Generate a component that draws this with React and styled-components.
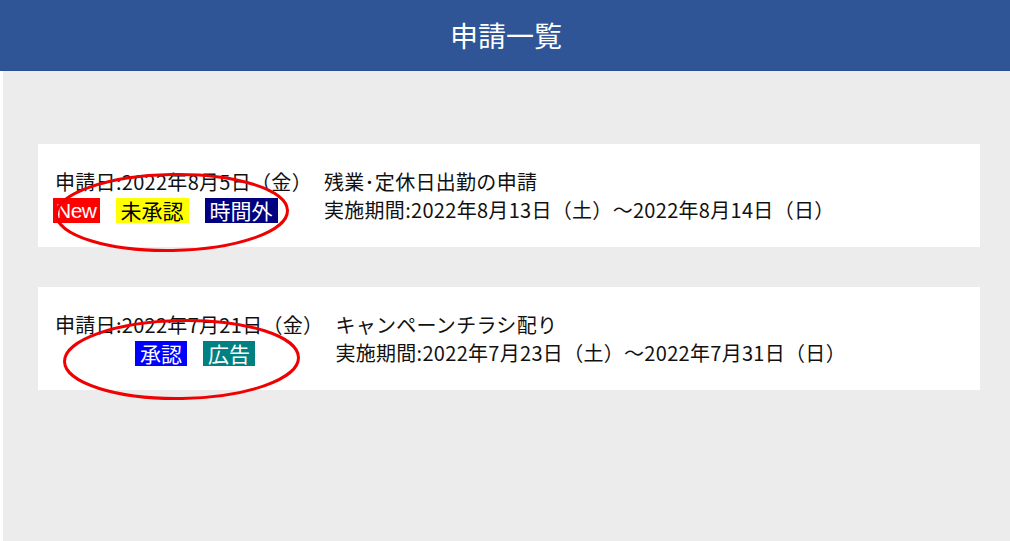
import styled, { createGlobalStyle } from "styled-components";

const GlobalStyle = createGlobalStyle`
  html, body {
    margin: 0;
    padding: 0;
    background: #ffffff;
  }
  body {
    font-family: "Noto Sans CJK JP", "Noto Sans", sans-serif;
    color: #111;
  }
`;

const requests = [
  {
    id: 1,
    applied: "申請日:2022年8月5日（金）",
    title: "残業･定休日出勤の申請",
    period: "実施期間:2022年8月13日（土）〜2022年8月14日（日）",
    indent: -2,
    badges: [
      { label: "New", bg: "#ff0000", fg: "#ffffff", latin: true },
      { label: "未承認", bg: "#ffff00", fg: "#000000" },
      { label: "時間外", bg: "#000080", fg: "#ffffff" },
    ],
    mark: { left: 17, top: 29, width: 234, height: 79 },
  },
  {
    id: 2,
    applied: "申請日:2022年7月21日（金）",
    title: "キャンペーンチラシ配り",
    period: "実施期間:2022年7月23日（土）〜2022年7月31日（日）",
    indent: 80,
    badges: [
      { label: "承認", bg: "#0000ff", fg: "#ffffff" },
      { label: "広告", bg: "#008080", fg: "#ffffff" },
    ],
    mark: { left: 25, top: 32, width: 237, height: 81 },
  },
];

const App = () => {
  return (
    <>
      <GlobalStyle />
      <Header>
        <Title>申請一覧</Title>
      </Header>
      <Main>
        {requests.map((r) => (
          <Card key={r.id}>
            <DateCol>
              <Line>{r.applied}</Line>
              <BadgeRow $indent={r.indent}>
                {r.badges.map((b) => (
                  <Badge key={b.label} $bg={b.bg} $fg={b.fg} $latin={b.latin}>
                    {b.label}
                  </Badge>
                ))}
              </BadgeRow>
            </DateCol>
            <InfoCol>
              <Line>{r.title}</Line>
              <Line>{r.period}</Line>
            </InfoCol>
            {/* red annotation drawn over the badges */}
            <Mark
              style={{ left: r.mark.left, top: r.mark.top }}
              width={r.mark.width}
              height={r.mark.height}
              viewBox={`0 0 ${r.mark.width} ${r.mark.height}`}
            >
              <ellipse
                cx={r.mark.width / 2}
                cy={r.mark.height / 2}
                rx={r.mark.width / 2 - 1.5}
                ry={r.mark.height / 2 - 1.5}
                fill="none"
                stroke="#f00000"
                strokeWidth="3"
                transform={`rotate(-1 ${r.mark.width / 2} ${r.mark.height / 2})`}
              />
            </Mark>
          </Card>
        ))}
      </Main>
    </>
  );
};

const Header = styled.header`
  height: 71px;
  background: #2f5597;
  border-bottom: 1px solid #2a4f8f;
  box-sizing: border-box;
  display: flex;
  align-items: center;
  justify-content: center;
`;

const Title = styled.h1`
  margin: 0 0 0 2px;
  color: #ffffff;
  font-size: 28px;
  font-weight: 400;
  letter-spacing: 0;
`;

const Main = styled.main`
  margin-left: 3px;
  min-height: calc(100vh - 71px);
  background: #ececec;
  padding: 73px 30px 0 35px;
  box-sizing: border-box;
  display: flex;
  flex-direction: column;
  gap: 40px;
`;

const Card = styled.section`
  position: relative;
  background: #ffffff;
  height: 103px;
  box-sizing: border-box;
  padding: 24px 17px 0;
  display: flex;
  gap: 12px;
`;

const DateCol = styled.div`
  display: flex;
  flex-direction: column;
`;

const InfoCol = styled.div`
  display: flex;
  flex-direction: column;
`;

const Line = styled.div`
  font-size: 20px;
  line-height: 28px;
  height: 28px;
  letter-spacing: 0.3px;
  white-space: nowrap;
`;

const BadgeRow = styled.div`
  display: flex;
  align-items: center;
  gap: 16px;
  height: 28px;
  margin-left: ${({ $indent }) => $indent}px;
`;

const Badge = styled.span`
  display: inline-block;
  height: 25px;
  line-height: 25px;
  padding: ${({ $latin }) => ($latin ? "0 3px" : "0 5px")};
  background: ${({ $bg }) => $bg};
  color: ${({ $fg }) => $fg};
  font-family: ${({ $latin }) =>
    $latin ? '"Liberation Sans", sans-serif' : '"Noto Sans CJK JP", sans-serif'};
  font-size: 21px;
  letter-spacing: ${({ $latin }) => ($latin ? "-0.5px" : "0")};
`;

const Mark = styled.svg`
  position: absolute;
  pointer-events: none;
  overflow: visible;
`;

export default App;
